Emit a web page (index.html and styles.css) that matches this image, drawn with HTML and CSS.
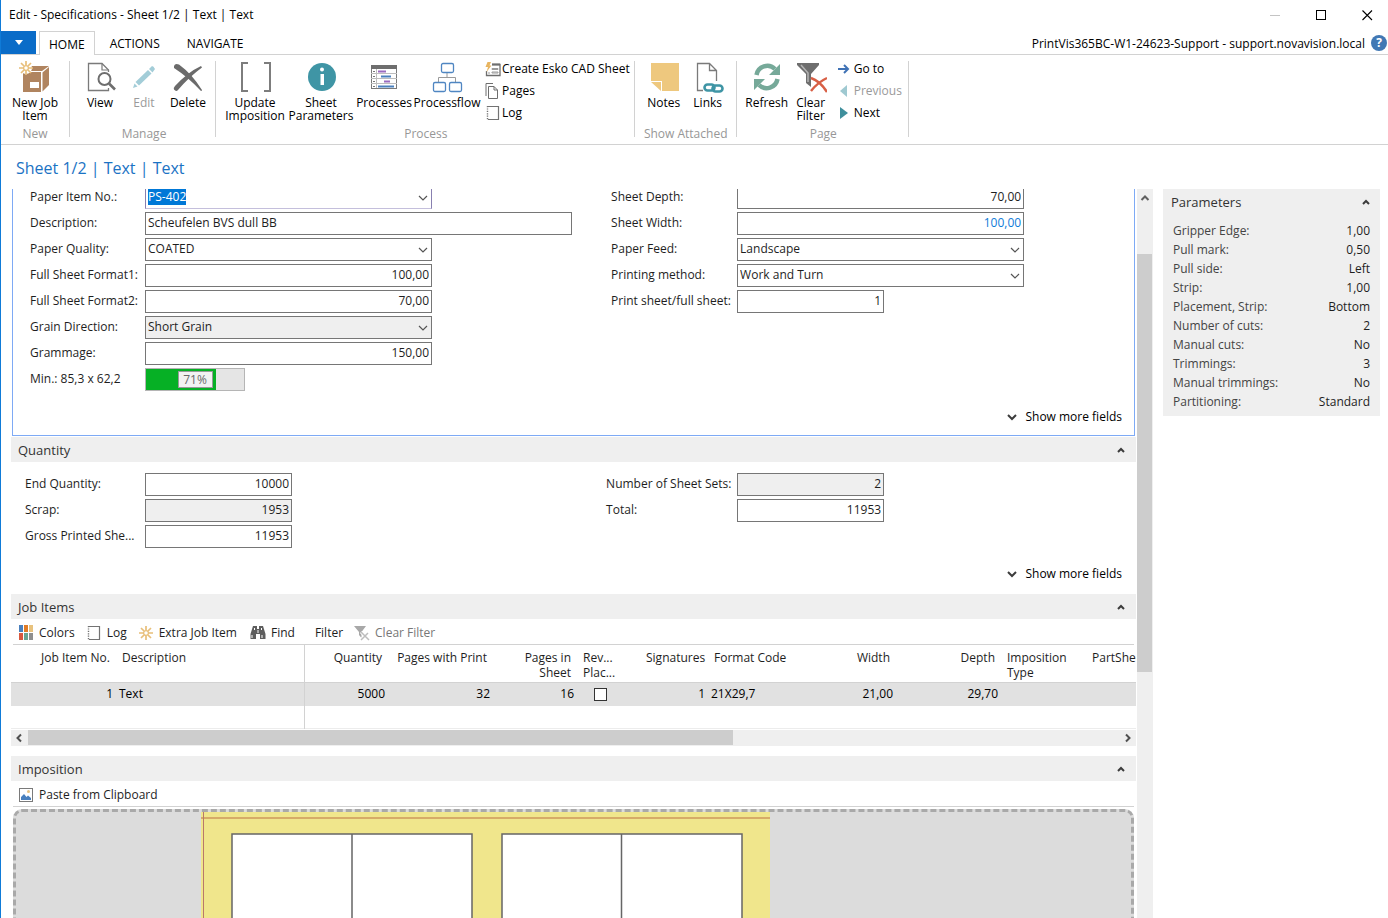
FILE: index.html
```html
<!DOCTYPE html>
<html lang="en">
<head>
    <meta charset="utf-8">
    <title>Edit - Specifications - Sheet 1/2 | Text | Text</title>
    <link rel="stylesheet" href="styles.css">
</head>
<body>
    <!-- shared icons -->
    <svg class="sprite" width="0" height="0">
        <symbol id="chev-up" viewBox="0 0 8 8"><path d="M1 6 L4 3 L7 6" fill="none" stroke="#3c3c3c" stroke-width="2"/></symbol>
        <symbol id="chev-down" viewBox="0 0 10 8"><path d="M1 2 L5 6 L9 2" fill="none" stroke="#3c3c3c" stroke-width="2"/></symbol>
        <symbol id="drop" viewBox="0 0 10 8"><path d="M1 2 L5 6 L9 2" fill="none" stroke="#555" stroke-width="1.2"/></symbol>
        <symbol id="log" viewBox="0 0 16 16"><path d="M3 1.5 H13.5 V14.5 H3" fill="none" stroke="#737373" stroke-width="1.2"/><path d="M2.5 1 V15" fill="none" stroke="#737373" stroke-width="1.4" stroke-dasharray="1.2 1.2"/></symbol>
        <symbol id="star" viewBox="0 0 14 14"><path d="M7 0 V4 M7 10 V14 M0 7 H4 M10 7 H14 M2 2 L5 5 M9 9 L12 12 M12 2 L9 5 M5 9 L2 12" stroke="#e8bf7a" stroke-width="1.7"/><circle cx="7" cy="7" r="2.4" fill="#fff" stroke="#e8bf7a" stroke-width="1.3"/></symbol>
    </svg>

    <div class="window">
        <div class="titlebar">
            <span>Edit - Specifications - Sheet 1/2 | Text | Text</span>
            <div class="window-buttons">
                <button aria-label="Minimize"><svg width="11" height="11"><path d="M0 5.5 H10" stroke="#c4c4c4"/></svg></button>
                <button aria-label="Maximize"><svg width="11" height="11"><rect x="0.5" y="0.5" width="9" height="9" fill="none" stroke="#000"/></svg></button>
                <button aria-label="Close"><svg width="11" height="11"><path d="M0.5 0.5 L10 10 M10 0.5 L0.5 10" stroke="#000" stroke-width="1.1"/></svg></button>
            </div>
        </div>

        <div class="tabs">
            <button class="file-menu" aria-label="Application menu"><svg width="8" height="5"><path d="M0 0 H8 L4 5 Z" fill="#fff"/></svg></button>
            <button class="tab active">HOME</button>
            <button class="tab">ACTIONS</button>
            <button class="tab">NAVIGATE</button>
            <span class="server">PrintVis365BC-W1-24623-Support - support.novavision.local</span>
            <button class="help" aria-label="Help">?</button>
        </div>

        <div class="ribbon">
            <div class="group group-new">
                <div class="commands">
                    <button class="big wide">
                        <svg width="32" height="32" viewBox="0 0 32 32">
                            <path d="M4 11 H22 V31 H4 Z" fill="#b0845f"/>
                            <path d="M5 10 L12 5 H30 L23 10 Z" fill="#b0845f"/>
                            <path d="M23.5 11.5 L30 6 V24 L23.5 30.5 Z" fill="#b0845f"/>
                            <rect x="11" y="21" width="9" height="6" fill="#fff"/>
                            <circle cx="7" cy="7" r="6" fill="#fff"/>
                            <use href="#star" x="0" y="0" width="14" height="14"/>
                        </svg>
                        <span>New Job<br>Item</span>
                    </button>
                </div>
                <div class="group-name">New</div>
            </div>
            <div class="group group-manage">
                <div class="commands">
                    <button class="big">
                        <svg width="32" height="32" viewBox="0 0 32 32" fill="none">
                            <path d="M24.5 11 V9 L18 2.5 H4.5 V29.5 H24.5 V27" stroke="#7a7a7a" stroke-width="1.3"/>
                            <path d="M18 2.5 V9 H24.5" stroke="#7a7a7a" stroke-width="1.2"/>
                            <circle cx="20.5" cy="18" r="6" fill="#fff" stroke="#6e6e6e" stroke-width="2"/>
                            <path d="M25 22.5 L31 28.5" stroke="#6e6e6e" stroke-width="2.6"/>
                        </svg>
                        <span>View</span>
                    </button>
                    <button class="big" disabled>
                        <svg width="32" height="32" viewBox="0 0 32 32" fill="#a3cdd8">
                            <path d="M5 27 L6.500 22.500 L9.500 25.500 Z"/>
                            <path d="M7.500 21 L20 9 L23.500 12.500 L11 24.500 Z"/>
                            <path d="M21 8 L24 5 Q25.500 5 27 8 L24.500 11.500 Z"/>
                        </svg>
                        <span>Edit</span>
                    </button>
                    <button class="big">
                        <svg width="32" height="32" viewBox="0 0 32 32" fill="#6b6b6b">
                            <path d="M2 5 Q3 2 7 3.500 Q20 13 30 29 Q30 30 29 30 Q16 16 2 7 Z"/>
                            <path d="M29 5 L30 6.500 Q17 16 6 29 Q4 31 2 28.500 Q1 27 3 25 Q16 11 29 5 Z"/>
                        </svg>
                        <span>Delete</span>
                    </button>
                </div>
                <div class="group-name">Manage</div>
            </div>
            <div class="group group-process">
                <div class="commands">
                    <button class="big wide">
                        <svg width="32" height="32" viewBox="0 0 32 32" fill="none" stroke="#7d7d7d" stroke-width="2">
                            <path d="M10 2 H4 V30 H10 M26 2 H32 V30 H26" transform="translate(-1 0)"/>
                        </svg>
                        <span>Update<br>Imposition</span>
                    </button>
                    <button class="big wide">
                        <svg width="32" height="32" viewBox="0 0 32 32">
                            <circle cx="17" cy="16" r="14" fill="#3f95a5"/>
                            <rect x="15.500" y="13" width="3.500" height="11" fill="#fff"/>
                            <circle cx="17" cy="8.500" r="2" fill="#fff"/>
                        </svg>
                        <span>Sheet<br>Parameters</span>
                    </button>
                    <button class="big mid">
                        <svg width="32" height="32" viewBox="0 0 32 32">
                            <rect x="3.500" y="4.500" width="25" height="23" fill="#fff" stroke="#7a7a7a"/>
                            <rect x="3" y="4" width="26" height="4" fill="#6e6e6e"/>
                            <path d="M8.500 8 V27 M3 12.500 H29 M3 17.500 H29 M3 22.500 H29" stroke="#bdbdbd"/>
                            <path d="M10 10.500 H18 M16 20.500 H22" stroke="#9a6bc0" stroke-width="2"/>
                            <path d="M13 15.500 H23 M10 25.500 H26" stroke="#4a80bd" stroke-width="2"/>
                            <path d="M5 10.500 H7 M5 15.500 H7 M5 20.500 H7 M5 25.500 H7" stroke="#777"/>
                        </svg>
                        <span>Processes</span>
                    </button>
                    <button class="big wide">
                        <svg width="32" height="32" viewBox="0 0 32 32" fill="none">
                            <path d="M16 12 V17 M7.500 21 V16.500 H24.500 V21" stroke="#9a9a9a"/>
                            <g stroke="#4f86c2" stroke-width="1.300">
                                <rect x="10.500" y="2.500" width="12" height="9" rx="1.500"/>
                                <rect x="2.500" y="21.500" width="12" height="9" rx="1.500"/>
                                <rect x="18.500" y="21.500" width="12" height="9" rx="1.500"/>
                            </g>
                        </svg>
                        <span>Processflow</span>
                    </button>
                    <div class="small-list">
                        <button class="small">
                            <svg width="16" height="16" viewBox="0 0 16 16">
                                <path d="M7 3.500 H15 V14.500 H1.500 V10" fill="none" stroke="#6e6e6e" stroke-width="1.300"/>
                                <path d="M7 3.500 H15" stroke="#6e6e6e" stroke-width="2"/>
                                <path d="M7 7.500 H13 V8.500 H7 Z M7 11 H13 V12 H7 Z M3 12 H5" fill="none" stroke="#9a9a9a"/>
                                <path d="M2.500 1 H6 L4.500 4.500 H6.500 L1.500 11 L3 6 H0.500 Z" fill="#e8b560"/>
                            </svg>
                            Create Esko CAD Sheet
                        </button>
                        <button class="small">
                            <svg width="16" height="16" viewBox="0 0 16 16" fill="none" stroke="#6e6e6e">
                                <path d="M1 13 V0.500 H8"/>
                                <path d="M3.500 3.500 H9 L12.500 7 V15.500 H3.500 Z M9 3.500 V7 H12.500"/>
                            </svg>
                            Pages
                        </button>
                        <button class="small"><svg width="16" height="16"><use href="#log"/></svg>Log</button>
                    </div>
                </div>
                <div class="group-name">Process</div>
            </div>
            <div class="group group-attached">
                <div class="commands">
                    <button class="big">
                        <svg width="32" height="32" viewBox="0 0 32 32">
                            <path d="M3 2 H31 V30 H14 V20 H3 Z" fill="#eec87e"/>
                            <path d="M3 21 H13 V30 Z" fill="#eec87e"/>
                        </svg>
                        <span>Notes</span>
                    </button>
                    <button class="big">
                        <svg width="32" height="32" viewBox="0 0 32 32" fill="none">
                            <path d="M11 29.500 H5.500 V2.500 H17.500 L24.500 9.500 V20 M17.500 2.500 V9.500 H24.500" stroke="#7a7a7a" stroke-width="1.300"/>
                            <g stroke="#3f95a5" stroke-width="2.600">
                                <rect x="12.500" y="23.500" width="10" height="6" rx="3"/>
                                <rect x="20.500" y="24.500" width="10" height="6" rx="3"/>
                            </g>
                        </svg>
                        <span>Links</span>
                    </button>
                </div>
                <div class="group-name">Show Attached</div>
            </div>
            <div class="group group-page">
                <div class="commands">
                    <button class="big">
                        <svg width="32" height="32" viewBox="0 0 32 32" fill="none" stroke="#76a999" stroke-width="4.500">
                            <path d="M5.500 14 A11 11 0 0 1 24 8"/>
                            <path d="M26.500 18 A11 11 0 0 1 8 24"/>
                            <path d="M29 3 V14 H18 Z M3 29 V18 H14 Z" fill="#76a999" stroke="none"/>
                        </svg>
                        <span>Refresh</span>
                    </button>
                    <button class="big">
                        <svg width="32" height="32" viewBox="0 0 32 32">
                            <path d="M2 2 H24 V4 L16 13 V26 L11 22 V13 L2 4 Z" fill="#6e6e6e"/>
                            <path d="M6 4 L13 12 V21" fill="none" stroke="#b5b5b5" stroke-width="1.500"/>
                            <path d="M17 16 Q25 21 32 30 M32 17 Q23 22 17 30" fill="none" stroke="#fff" stroke-width="5"/>
                            <path d="M16 17 Q25 20 32 31 M32 17 Q23 21 16 30" fill="none" stroke="#d85f45" stroke-width="2.400"/>
                        </svg>
                        <span>Clear<br>Filter</span>
                    </button>
                    <div class="small-list">
                        <button class="small"><svg width="12" height="12"><path d="M0 6 H10 M6 2 L10 6 L6 10" fill="none" stroke="#3f72b5" stroke-width="2"/></svg>Go to</button>
                        <button class="small" disabled><svg width="12" height="12"><path d="M9 0 V12 L2 6 Z" fill="#9fc9d1"/></svg>Previous</button>
                        <button class="small"><svg width="12" height="12"><path d="M2 0 V12 L10 6 Z" fill="#3f8f9c"/></svg>Next</button>
                    </div>
                </div>
                <div class="group-name">Page</div>
            </div>
        </div>

        <h1>Sheet 1/2 | Text | Text</h1>

        <div class="content">
            <main class="pane">
                <section class="general">
                    <div class="fields">
                        <div class="column">
                            <div class="field">
                                <label for="paperItem">Paper Item No.:</label>
                                <div class="combo lookup"><input id="paperItem" type="text" value="PS-402"><svg width="10" height="8"><use href="#drop"/></svg></div>
                            </div>
                            <div class="field"><label for="description">Description:</label><input class="long" id="description" type="text" value="Scheufelen BVS dull BB"></div>
                            <div class="field">
                                <label for="quality">Paper Quality:</label>
                                <div class="combo"><select id="quality"><option>COATED</option></select><svg width="10" height="8"><use href="#drop"/></svg></div>
                            </div>
                            <div class="field"><label for="format1">Full Sheet Format1:</label><input class="number" id="format1" type="text" value="100,00"></div>
                            <div class="field"><label for="format2">Full Sheet Format2:</label><input class="number" id="format2" type="text" value="70,00"></div>
                            <div class="field">
                                <label for="grain">Grain Direction:</label>
                                <div class="combo"><select class="locked" id="grain"><option>Short Grain</option></select><svg width="10" height="8"><use href="#drop"/></svg></div>
                            </div>
                            <div class="field"><label for="grammage">Grammage:</label><input class="number" id="grammage" type="text" value="150,00"></div>
                            <div class="field">
                                <span class="label">Min.: 85,3 x 62,2</span>
                                <div class="usage">
                                    <div class="usage-bar" style="width: 71%"><span>71%</span></div>
                                </div>
                            </div>
                        </div>
                        <div class="column right">
                            <div class="field"><label for="depth">Sheet Depth:</label><input class="number" id="depth" type="text" value="70,00"></div>
                            <div class="field"><label for="width">Sheet Width:</label><input class="number changed" id="width" type="text" value="100,00"></div>
                            <div class="field">
                                <label for="feed">Paper Feed:</label>
                                <div class="combo"><select id="feed"><option>Landscape</option></select><svg width="10" height="8"><use href="#drop"/></svg></div>
                            </div>
                            <div class="field">
                                <label for="method">Printing method:</label>
                                <div class="combo"><select id="method"><option>Work and Turn</option></select><svg width="10" height="8"><use href="#drop"/></svg></div>
                            </div>
                            <div class="field"><label for="perSheet">Print sheet/full sheet:</label><input class="number short" id="perSheet" type="text" value="1"></div>
                        </div>
                    </div>
                    <button class="more"><svg width="10" height="8"><use href="#chev-down"/></svg>Show more fields</button>
                </section>

                <section class="quantity">
                    <header class="section-head"><h2>Quantity</h2><button aria-label="Collapse Quantity"><svg width="8" height="8"><use href="#chev-up"/></svg></button></header>
                    <div class="fields">
                        <div class="column">
                            <div class="field"><label for="endQty">End Quantity:</label><input class="number short" id="endQty" type="text" value="10000"></div>
                            <div class="field"><label for="scrap">Scrap:</label><input class="number short locked" id="scrap" type="text" value="1953" readonly></div>
                            <div class="field"><label for="gross">Gross Printed She...</label><input class="number short" id="gross" type="text" value="11953"></div>
                        </div>
                        <div class="column right">
                            <div class="field"><label for="sets">Number of Sheet Sets:</label><input class="number short locked" id="sets" type="text" value="2" readonly></div>
                            <div class="field"><label for="total">Total:</label><input class="number short" id="total" type="text" value="11953"></div>
                        </div>
                    </div>
                    <button class="more"><svg width="10" height="8"><use href="#chev-down"/></svg>Show more fields</button>
                </section>

                <section class="job-items">
                    <header class="section-head"><h2>Job Items</h2><button aria-label="Collapse Job Items"><svg width="8" height="8"><use href="#chev-up"/></svg></button></header>
                    <div class="toolbar">
                        <button>
                            <svg width="16" height="16" viewBox="0 0 16 16">
                                <path d="M1 0 H5 V7 H1 Z" fill="#4a80bd"/><path d="M6 0 H10 V7 H6 Z" fill="#e07b26"/><path d="M11 0 H15 V7 H11 Z" fill="#e8c27e"/>
                                <path d="M1 8 H5 V15 H1 Z" fill="#d8583e"/><path d="M6 8 H10 V15 H6 Z" fill="#67a592"/><path d="M11 8 H15 V15 H11 Z" fill="#8f8f8f"/>
                            </svg>
                            Colors
                        </button>
                        <button><svg width="16" height="16"><use href="#log"/></svg>Log</button>
                        <button><svg width="16" height="16" viewBox="-1 -1 16 16"><use href="#star" width="14" height="14"/></svg>Extra Job Item</button>
                        <button class="find">
                            <svg width="16" height="16" viewBox="0 0 16 16" fill="#5e5e5e">
                                <path d="M3 1 H7 V4 H9 V1 H13 L15.500 9 V14 H10 V9 H6 V14 H0.500 V9 Z"/>
                                <path d="M2 10 V13 M12 10 V13 M4.500 3 V5 M11.500 3 V5 M8 5 V8" stroke="#fff"/>
                            </svg>
                            Find
                        </button>
                        <button class="filter">Filter</button>
                        <button class="clear" disabled>
                            <svg width="16" height="16" viewBox="0 0 16 16">
                                <path d="M0 1 H12 L7.500 7 V13 L5 10 V7 Z" fill="#a8a8a8"/>
                                <path d="M7 7 L15 15 M15 8 L7 15" stroke="#fff" stroke-width="3"/>
                                <path d="M7 7 L15 15 M14 8 L7 15" stroke="#bdbdbd" stroke-width="1.500"/>
                            </svg>
                            Clear Filter
                        </button>
                    </div>
                    <table>
                        <colgroup>
                            <col class="c-no"><col class="c-desc"><col class="c-qty"><col class="c-print"><col class="c-sheet"><col class="c-rev">
                            <col class="c-sig"><col class="c-format"><col class="c-print"><col class="c-print"><col class="c-type"><col>
                        </colgroup>
                        <thead>
                            <tr>
                                <th class="num">Job Item No.</th>
                                <th class="split">Description</th>
                                <th class="num">Quantity</th>
                                <th class="num">Pages with Print</th>
                                <th class="num">Pages in<br>Sheet</th>
                                <th>Rev...<br>Plac...</th>
                                <th class="num">Signatures</th>
                                <th>Format Code</th>
                                <th class="num">Width</th>
                                <th class="num">Depth</th>
                                <th>Imposition<br>Type</th>
                                <th>PartSheet</th>
                            </tr>
                        </thead>
                        <tbody>
                            <tr class="selected">
                                <td class="num">1</td>
                                <td class="split">Text</td>
                                <td class="num">5000</td>
                                <td class="num">32</td>
                                <td class="num">16</td>
                                <td class="check"><input type="checkbox" aria-label="Rev. Plac."></td>
                                <td class="num">1</td>
                                <td>21X29,7</td>
                                <td class="num">21,00</td>
                                <td class="num">29,70</td>
                                <td></td>
                                <td></td>
                            </tr>
                            <tr>
                                <td></td><td class="split"></td><td></td><td></td><td></td><td></td>
                                <td></td><td></td><td></td><td></td><td></td><td></td>
                            </tr>
                        </tbody>
                    </table>
                    <div class="hscroll">
                        <svg width="17" height="16"><path d="M10 4.500 L6.500 8 L10 11.500" fill="none" stroke="#505050" stroke-width="2"/></svg>
                        <div class="track"><div class="thumb" style="width: 64.6%"></div></div>
                        <svg width="17" height="16"><path d="M7 4.500 L10.500 8 L7 11.500" fill="none" stroke="#505050" stroke-width="2"/></svg>
                    </div>
                </section>

                <section class="imposition">
                    <header class="section-head"><h2>Imposition</h2><button aria-label="Collapse Imposition"><svg width="8" height="8"><use href="#chev-up"/></svg></button></header>
                    <div class="toolbar">
                        <button>
                            <svg width="16" height="16" viewBox="0 0 16 16">
                                <rect x="1.500" y="1.500" width="13" height="13" fill="#fff" stroke="#7a7a7a"/>
                                <path d="M3 13 V10 L6 7 L8.500 10 L10 8.500 L13 11 V13 Z" fill="#4a80bd"/>
                                <circle cx="10.500" cy="4.500" r="1.500" fill="#e8c27e"/>
                            </svg>
                            Paste from Clipboard
                        </button>
                    </div>
                    <div class="canvas">
                        <svg width="570" height="400" viewBox="0 0 570 400">
                            <rect width="569" height="400" fill="#f0e68c"/>
                            <path d="M0 6 H569" stroke="#d6ab68" stroke-width="2"/>
                            <path d="M2.500 0 V400" stroke="#b9786a"/>
                            <g fill="#fff" stroke="#666" stroke-width="1.500">
                                <path d="M31 22 H271 V396 H31 Z M151 22 V396"/>
                                <path d="M301 22 H541 V396 H301 Z M420.500 22 V396"/>
                            </g>
                        </svg>
                    </div>
                </section>
            </main>

            <div class="vscroll">
                <svg width="16" height="16"><path d="M4.500 11 L8 7.500 L11.500 11" fill="none" stroke="#606060" stroke-width="2"/></svg>
                <div class="vtrack"><div class="vthumb"></div></div>
            </div>

            <aside class="factbox">
                <header><h2>Parameters</h2><button aria-label="Collapse Parameters"><svg width="8" height="8"><use href="#chev-up"/></svg></button></header>
                <dl>
                    <div><dt>Gripper Edge:</dt><dd>1,00</dd></div>
                    <div><dt>Pull mark:</dt><dd>0,50</dd></div>
                    <div><dt>Pull side:</dt><dd>Left</dd></div>
                    <div><dt>Strip:</dt><dd>1,00</dd></div>
                    <div><dt>Placement, Strip:</dt><dd>Bottom</dd></div>
                    <div><dt>Number of cuts:</dt><dd>2</dd></div>
                    <div><dt>Manual cuts:</dt><dd>No</dd></div>
                    <div><dt>Trimmings:</dt><dd>3</dd></div>
                    <div><dt>Manual trimmings:</dt><dd>No</dd></div>
                    <div><dt>Partitioning:</dt><dd>Standard</dd></div>
                </dl>
            </aside>
        </div>
    </div>

    <script>
        // The page opens with the first field ready to be overwritten
        const paperItem = document.getElementById('paperItem');
        paperItem.focus();
        paperItem.select();
    </script>
</body>
</html>
```
FILE: styles.css
```css
:root {
    --blue: #0a6cc8;
    --line: #d2d2d2;
    --head: #efefef;
    --thumb: #cdcdcd;
}

* {
    box-sizing: border-box;
}

body {
    margin: 0;
    font-family: "Open Sans", "Noto Sans", sans-serif;
    font-size: 12px;
    line-height: 16px;
    color: #1e1e1e;
    background: #fff;
}

button,
input,
select {
    font: inherit;
    color: inherit;
}

button {
    padding: 0;
    border: none;
    background: none;
    white-space: nowrap;
}

h1,
h2,
dl,
dd {
    margin: 0;
    font-weight: normal;
}

svg {
    display: block;
    flex: none;
}

.sprite {
    position: absolute;
}

.window {
    display: flex;
    flex-direction: column;
    height: 100vh;
    overflow: hidden;
    border-left: 1px solid #0f7bd8;
}

/* Title bar */
.titlebar {
    display: flex;
    justify-content: space-between;
    align-items: center;
    height: 30px;
    padding-left: 8px;
    color: #000;
}

.window-buttons {
    display: flex;
    margin-right: -2px;
}

.window-buttons button {
    display: flex;
    justify-content: center;
    width: 46px;
}

/* Tabs */
.tabs {
    display: flex;
    align-items: stretch;
    height: 25px;
    padding-top: 1px;
    border-bottom: 1px solid var(--line);
    color: #000;
}

.file-menu {
    display: flex;
    align-items: center;
    justify-content: center;
    width: 35px;
    margin-right: 3px;
    background: var(--blue);
}

.tab {
    padding: 3px 12px 0;
}

.tab + .tab {
    margin-left: 3px;
}

.tab.active {
    padding: 2px 9px 0;
    margin-bottom: -1px;
    border: 1px solid var(--line);
    border-bottom: none;
    background: #fff;
}

.server {
    margin-left: auto;
    padding-top: 5px;
}

.help {
    align-self: center;
    width: 16px;
    height: 16px;
    margin: 0 1px 0 6px;
    border-radius: 50%;
    background: #4178b4;
    color: #fff;
    font-weight: bold;
}

/* Ribbon */
.ribbon {
    display: flex;
    height: 90px;
    padding: 6px 0 7px;
    border-bottom: 1px solid var(--line);
    color: #000;
}

.group {
    border-right: 1px solid var(--line);
}

.group-new { padding: 0 1px; }
.group-manage { padding: 0 5px 0 8px; }
.group-process { padding: 0 4px 0 6px; }
.group-attached { padding: 0 6px 0 7px; }
.group-page { padding: 0 6px 0 8px; }

.commands {
    display: flex;
    height: 66px;
}

.group-name {
    line-height: 14px;
    text-align: center;
    color: #979797;
}

.big {
    display: flex;
    flex-direction: column;
    align-items: center;
    width: 44px;
    line-height: 13px;
}

.big.mid { width: 60px; }
.big.wide { width: 66px; }

.big span {
    margin-top: 3px;
}

button:disabled {
    color: #9a9a9a;
}

.small-list {
    display: flex;
    flex-direction: column;
    margin-top: -3px;
    padding-left: 5px;
}

.small {
    display: flex;
    align-items: center;
    gap: 1px;
    height: 22px;
}

.group-page .small {
    gap: 4px;
}

h1 {
    height: 44px;
    padding: 11px 15px 0;
    font-size: 16px;
    line-height: 24px;
    color: #1b73c4;
}

/* Content */
.content {
    display: flex;
    flex: 1;
    min-height: 0;
    padding: 0 8px 0 10px;
}

.pane {
    flex: 1;
    min-width: 0;
    overflow: hidden;
}

.general {
    margin: -3px 1px 1px;
    padding: 0 0 10px 17px;
    border: 1px solid #7eaaf5;
    border-top: none;
}

.quantity .fields {
    padding: 11px 7px 0 14px;
}

.quantity .more {
    margin-bottom: 12px;
}

.fields {
    display: grid;
    grid-template-columns: 14fr 13fr;
    column-gap: 18px;
}

.column {
    display: flex;
    flex-direction: column;
    gap: 3px;
}

.field {
    display: flex;
    height: 23px;
}

.field label,
.field .label {
    flex: none;
    width: 115px;
    padding-top: 3px;
    white-space: nowrap;
}

.right .field label { width: 126px; }
.quantity .field label { width: 120px; }
.quantity .right .field label { width: 131px; }

.field input,
.field select {
    width: 287px;
    height: 23px;
    padding: 0 2px 2px;
    border: 1px solid #767676;
    border-radius: 0;
    background: #fff;
    outline: none;
    appearance: none;
}

.field .number { text-align: right; }
.field .short { width: 147px; }
.field .long { width: 427px; }
.field .changed { color: #0f7bd8; }
.field .locked { background: #efefef; }

.combo {
    position: relative;
}

.combo svg {
    position: absolute;
    right: 4px;
    top: 8px;
}

.field .lookup input {
    border-color: #8880b0;
    border-bottom-color: #c4bfdc;
}

.lookup input::selection {
    background: #0078d7;
    color: #fff;
}

.usage {
    width: 100px;
    border: 1px solid #b5b5b5;
    background: #e5e5e5;
}

.usage-bar {
    display: flex;
    align-items: center;
    justify-content: flex-end;
    height: 21px;
    padding-right: 3px;
    background: #06b025;
}

.usage-bar span {
    width: 35px;
    border: 1px solid #999;
    background: #f2f2f2;
    line-height: 15px;
    text-align: center;
    color: #6a6a6a;
}

.more {
    display: flex;
    align-items: center;
    gap: 8px;
    margin: 18px 12px 0 auto;
    color: #000;
}

.quantity .more {
    margin-right: 14px;
}

.section-head {
    display: flex;
    align-items: center;
    justify-content: space-between;
    height: 25px;
    padding: 0 11px 0 7px;
    background: var(--head);
}

h2 {
    font-size: 13px;
    line-height: 18px;
    color: #333;
}

.toolbar {
    display: flex;
    align-items: center;
    height: 26px;
    margin: 0 2px;
    padding: 2px 0 0 5px;
    border-bottom: 1px solid var(--line);
}

.toolbar button {
    display: flex;
    align-items: center;
    gap: 5px;
    margin-right: 11px;
}

.toolbar .find { margin-left: 2px; }
.toolbar .filter { margin-left: 9px; }
.toolbar .clear { color: #777; }

/* Job items table */
table {
    width: 100%;
    table-layout: fixed;
    border-collapse: collapse;
    border-bottom: 1px solid #ececec;
}

.c-no { width: 105px; }
.c-desc { width: 188px; }
.c-qty { width: 84px; }
.c-print { width: 105px; }
.c-sheet { width: 84px; }
.c-rev { width: 63px; }
.c-sig { width: 68px; }
.c-format { width: 83px; }
.c-type { width: 85px; }

th,
td {
    overflow: hidden;
    text-align: left;
    font-weight: normal;
    white-space: nowrap;
}

th {
    height: 37px;
    padding: 5px 6px 2px;
    border-bottom: 1px solid var(--line);
    line-height: 15px;
    vertical-align: top;
}

td {
    height: 23px;
    padding: 0 3px;
    color: #000;
}

.num { text-align: right; }
.split { border-right: 1px solid var(--line); }
.selected { background: #e1e1e1; }

.check input {
    display: block;
    width: 13px;
    height: 13px;
    margin: 0 14px;
    border: 1px solid #333;
    background: #fff;
    appearance: none;
}

.hscroll {
    display: flex;
    height: 16px;
    margin: 1px 0 10px;
    background: var(--head);
}

.track {
    flex: 1;
}

.thumb {
    height: 15px;
    background: var(--thumb);
}

.canvas {
    margin: 2px 2px 0;
    padding-left: 185px;
    border: 3px dashed #a9a9a9;
    border-radius: 9px;
    background: #dcdcdc;
}

.vscroll {
    display: flex;
    flex-direction: column;
    width: 16px;
    margin: 0 10px 0 1px;
    background: var(--head);
}

.vtrack {
    flex: 1;
    padding-top: 49px;
}

.vthumb {
    width: 15px;
    height: 63%;
    background: var(--thumb);
}

/* Fact box */
.factbox {
    align-self: flex-start;
    width: 217px;
    padding: 4px 10px 5px;
    background: var(--head);
}

.factbox header {
    display: flex;
    align-items: center;
    justify-content: space-between;
    margin: 0 0 10px -2px;
}

.factbox dl div {
    display: flex;
    justify-content: space-between;
    line-height: 19px;
}

.factbox dt {
    color: #444;
}
```
